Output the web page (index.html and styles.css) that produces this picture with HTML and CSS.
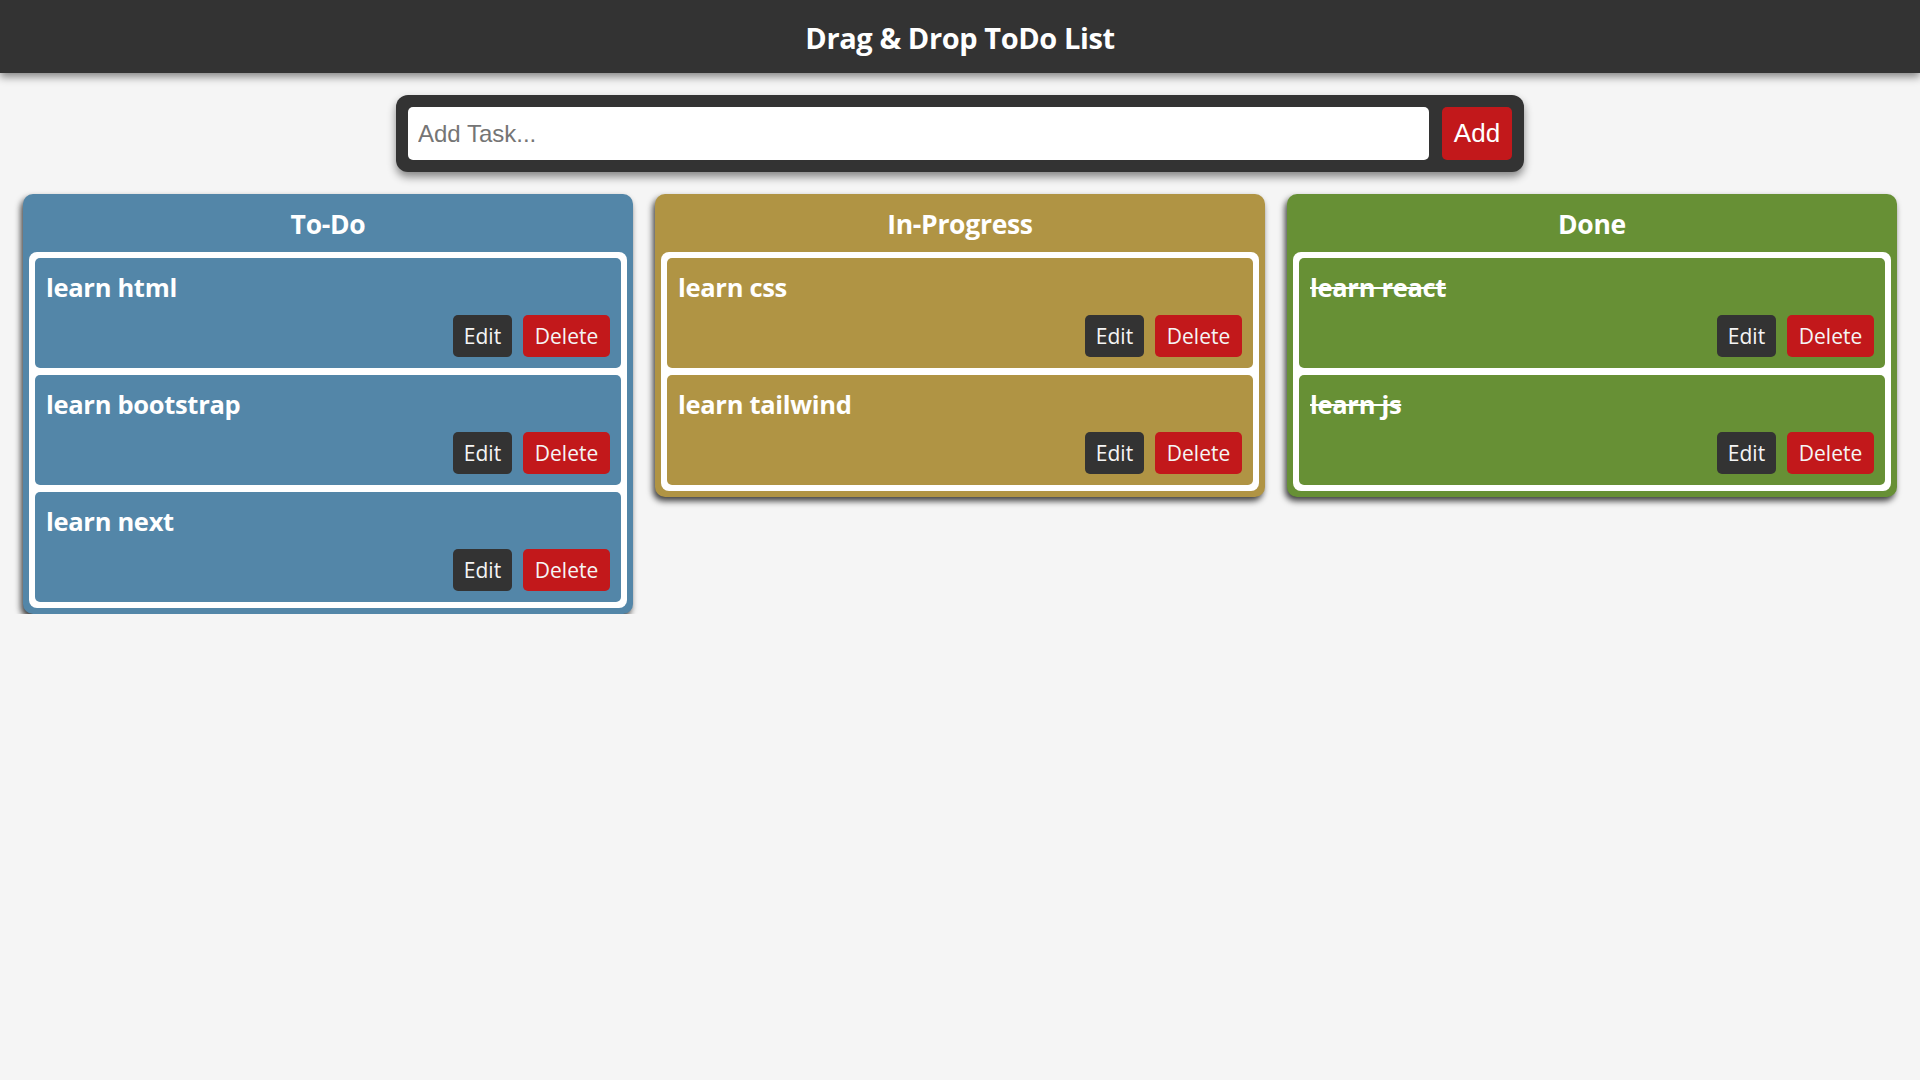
FILE: index.html
```html
<!DOCTYPE html>
<html lang="en">
<head>
<meta charset="UTF-8">
<title>Drag &amp; Drop ToDo List</title>
<link rel="stylesheet" href="styles.css">
</head>
<body>
<header class="topbar">
  <h1 class="title">Drag &amp; Drop ToDo List</h1>
</header>
<main class="page">
  <form class="add-bar">
    <input class="add-input" type="text" placeholder="Add Task...">
    <button class="add-btn" type="button">Add</button>
  </form>
  <section class="board">
    <div class="column column-todo">
      <h2 class="column-title">To-Do</h2>
      <div class="list">
        <div class="card">
          <p class="card-text">learn html</p>
          <div class="card-actions"><button class="btn btn-edit">Edit</button><button class="btn btn-delete">Delete</button></div>
        </div>
        <div class="card">
          <p class="card-text">learn bootstrap</p>
          <div class="card-actions"><button class="btn btn-edit">Edit</button><button class="btn btn-delete">Delete</button></div>
        </div>
        <div class="card">
          <p class="card-text">learn next</p>
          <div class="card-actions"><button class="btn btn-edit">Edit</button><button class="btn btn-delete">Delete</button></div>
        </div>
      </div>
    </div>
    <div class="column column-progress">
      <h2 class="column-title">In-Progress</h2>
      <div class="list">
        <div class="card">
          <p class="card-text">learn css</p>
          <div class="card-actions"><button class="btn btn-edit">Edit</button><button class="btn btn-delete">Delete</button></div>
        </div>
        <div class="card">
          <p class="card-text">learn tailwind</p>
          <div class="card-actions"><button class="btn btn-edit">Edit</button><button class="btn btn-delete">Delete</button></div>
        </div>
      </div>
    </div>
    <div class="column column-done">
      <h2 class="column-title">Done</h2>
      <div class="list">
        <div class="card">
          <p class="card-text card-text-done">learn react</p>
          <div class="card-actions"><button class="btn btn-edit">Edit</button><button class="btn btn-delete">Delete</button></div>
        </div>
        <div class="card">
          <p class="card-text card-text-done">learn js</p>
          <div class="card-actions"><button class="btn btn-edit">Edit</button><button class="btn btn-delete">Delete</button></div>
        </div>
      </div>
    </div>
  </section>
</main>
</body>
</html>
```
FILE: styles.css
```css
* { box-sizing: border-box; }

body {
  margin: 0;
  background: #f5f5f5;
  font-family: "Open Sans", "Noto Sans", sans-serif;
  color: #fff;
}

.topbar {
  height: 73px;
  padding-top: 2px;
  background: #333333;
  display: flex;
  align-items: center;
  justify-content: center;
  box-shadow: 0 4px 8px rgba(0, 0, 0, 0.45);
}

.title {
  margin: 0;
  font-size: 29px;
  font-weight: 700;
  letter-spacing: -0.4px;
  color: #fff;
}

.page {
  padding-top: 22px;
}

.add-bar {
  width: 1128px;
  margin: 0 auto;
  background: #333333;
  border-radius: 12px;
  padding: 12px;
  display: flex;
  gap: 13px;
  box-shadow: 0 5px 8px rgba(0, 0, 0, 0.45);
}

.add-input {
  flex: 1;
  height: 53px;
  border: none;
  border-radius: 5px;
  background: #fff;
  padding: 0 10px;
  font-family: "Liberation Sans", Arial, sans-serif;
  font-size: 24px;
  color: #333;
  outline: none;
}

.add-input::placeholder { color: #757575; }

.add-btn {
  width: 70px;
  height: 53px;
  border: none;
  border-radius: 5px;
  background: #c2181b;
  color: #fff;
  font-family: "Liberation Sans", Arial, sans-serif;
  font-size: 26px;
  padding: 0;
}

.board {
  margin-top: 22px;
  padding: 0 22px 0 23px;
  display: flex;
  align-items: flex-start;
  gap: 22px;
}

.column {
  width: 610px;
  border-radius: 10px;
  padding: 0 6px 6px;
  box-shadow: -2px 4px 6px rgba(0, 0, 0, 0.75);
}

.column-todo { background: #5386a8; }
.column-progress { background: #b09444; }
.column-done { background: #679035; }

.column-title {
  margin: 0;
  height: 58px;
  padding-top: 2px;
  display: flex;
  align-items: center;
  justify-content: center;
  font-size: 26.5px;
  font-weight: 700;
  letter-spacing: -0.3px;
}

.list {
  background: #fff;
  border-radius: 8px;
  padding: 6px;
  display: flex;
  flex-direction: column;
  gap: 7px;
}

.card {
  border-radius: 5px;
  padding: 11px;
}

.column-todo .card { background: #5386a8; }
.column-progress .card { background: #b09444; }
.column-done .card { background: #679035; }

.card-text {
  margin: 0 0 11px;
  height: 35px;
  line-height: 37px;
  font-size: 25.5px;
  font-weight: 700;
  letter-spacing: -0.3px;
}

.card-text-done { text-decoration: line-through; }

.card-actions {
  display: flex;
  justify-content: flex-end;
  gap: 11px;
}

.btn {
  height: 42px;
  border: none;
  border-radius: 5px;
  padding: 0 10px;
  font-family: "Open Sans", "Noto Sans", sans-serif;
  font-size: 21px;
  color: #f5f5f5;
}

.btn-edit { background: #333333; min-width: 59px; }
.btn-delete { background: #c2181b; min-width: 87px; }
```
